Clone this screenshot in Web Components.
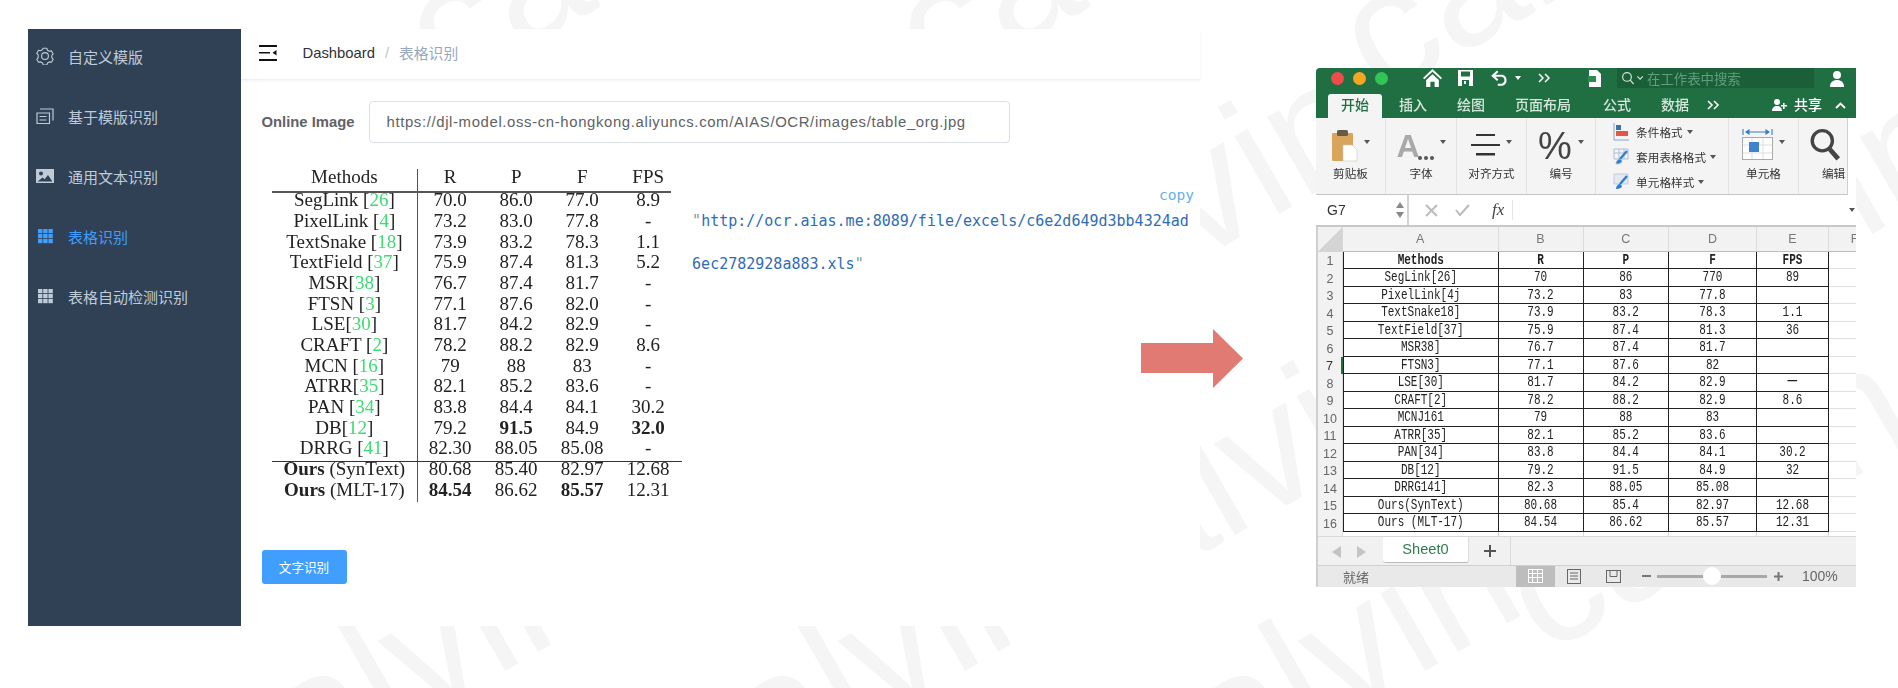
<!DOCTYPE html>
<html lang="zh">
<head>
<meta charset="utf-8">
<title>表格识别</title>
<style>
  html, body { margin: 0; background: #fff; }
  body { font-family: "Liberation Sans", "Noto Sans CJK SC", sans-serif; }
</style>
</head>
<body>
<demo-page>
  <water-mark slot="back"></water-mark>
  <demo-panel></demo-panel>
  <flow-arrow></flow-arrow>
  <excel-window></excel-window>
</demo-page>

<script>
const CJK = '"Liberation Sans", "Noto Sans CJK SC", sans-serif';

class DemoPage extends HTMLElement {
  constructor() {
    super();
    this.attachShadow({ mode: 'open' });
    this.shadowRoot.innerHTML = `
      <style>
        :host { display: block; position: relative; width: 1898px; height: 688px; overflow: hidden; }
        .row { position: relative; display: flex; align-items: flex-start; }
      </style>
      <slot name="back"></slot>
      <div class="row"><slot></slot></div>
    `;
  }
}

class WaterMark extends HTMLElement {
  constructor() {
    super();
    this.attachShadow({ mode: 'open' });
    const spots = [
      [445, 95], [935, 95], [1380, 100],
      [1007, 370], [1600, 390],
      [1069, 630], [1545, 655],
      [233, 827], [693, 827], [1153, 827]
    ];
    this.shadowRoot.innerHTML = `
      <style>
        :host { display: block; position: absolute; inset: 0; overflow: hidden; }
        span {
          position: absolute;
          font: 170px/1 "Liberation Sans", sans-serif;
          color: #f5f5f5;
          transform-origin: 0 84%;
          transform: rotate(-30deg);
          white-space: nowrap;
        }
      </style>
      ${spots.map(([x, y]) => `<span style="left:${x}px;top:${y - 143}px">calvin</span>`).join('')}
    `;
  }
}

class DemoPanel extends HTMLElement {
  constructor() {
    super();
    this.attachShadow({ mode: 'open' });
    this.shadowRoot.innerHTML = `
      <style>
        :host {
          display: flex;
          flex: none;
          width: 1172px;
          height: 597px;
          margin: 29px 0 0 28px;
          background: #fff;
        }
        main { flex: 1; min-width: 0; display: flex; flex-direction: column; }
        .form { padding: 21px 0 0 21px; }
        .url { display: flex; align-items: center; height: 42px; }
        label { width: 107px; font-size: 14.8px; font-weight: bold; color: #606266; }
        .input {
          box-sizing: border-box;
          width: 641px;
          height: 42px;
          line-height: 40px;
          padding-left: 17px;
          border: 1px solid #dcdfe6;
          border-radius: 4px;
          font-size: 14.9px;
          letter-spacing: .63px;
          color: #606266;
          white-space: nowrap;
        }
        .body { display: flex; margin: 23.6px 0 0 10px; }
        button {
          display: block;
          width: 85px;
          height: 34px;
          margin-top: 49.3px;
          padding: 0;
          border: 0;
          border-radius: 3px;
          background: #409eff;
          color: #fff;
          font: 12.6px ${CJK};
        }
      </style>
      <side-menu></side-menu>
      <main>
        <top-bar></top-bar>
        <div class="form">
          <div class="url">
            <label>Online Image</label>
            <div class="input">https://djl-model.oss-cn-hongkong.aliyuncs.com/AIAS/OCR/images/table_org.jpg</div>
          </div>
          <div class="body">
            <paper-table></paper-table>
            <result-box></result-box>
          </div>
          <button>文字识别</button>
        </div>
      </main>
    `;
  }
}

class SideMenu extends HTMLElement {
  constructor() {
    super();
    this.attachShadow({ mode: 'open' });
    const grid = `<svg width="18" height="18" viewBox="0 0 18 18" fill="currentColor">
      ${[2, 7, 12].map(y => [2, 7.2, 12.4].map(x => `<rect x="${x}" y="${y}" width="4.4" height="4.2"/>`).join('')).join('')}
    </svg>`;
    const items = [
      ['自定义模版', `<svg width="18" height="18" viewBox="0 0 18 18" fill="none" stroke="currentColor" stroke-width="1.1">
        <path d="M7.2 1.2h3.6l.7 2 1.9 1.1 2.1-.4 1.7 3-1.4 1.6v2.2l1.4 1.6-1.7 3-2.1-.4-1.9 1.1-.7 2H7.2l-.7-2-1.9-1.1-2.1.4-1.7-3 1.4-1.6V7.9L.8 6.3l1.7-3 2.1.4 1.9-1.1z" stroke-linejoin="round"/>
        <circle cx="9" cy="9" r="3.4"/></svg>`],
      ['基于模版识别', `<svg width="18" height="18" viewBox="0 0 18 18" fill="none" stroke="currentColor" stroke-width="1.2">
        <path d="M1 6h12.5v10.5H1z"/><path d="M4 2h13v11.5"/><path d="M3.5 9.5h7M3.5 13h7"/></svg>`],
      ['通用文本识别', `<svg width="18" height="18" viewBox="0 0 18 18">
        <path fill="currentColor" fill-rule="evenodd" d="M0 2h18v14H0zM5 4.5a2 2 0 1 0 0 4 2 2 0 0 0 0-4zM1.600 14.400h14.800L12 8l-3.400 4.200-2-1.600z"/></svg>`],
      ['表格识别', grid, true],
      ['表格自动检测识别', grid]
    ];
    this.shadowRoot.innerHTML = `
      <style>
        :host {
          display: block;
          flex: none;
          width: 212.5px;
          background: #304156;
          font: 15px ${CJK};
          color: #bfcbd9;
          overflow: hidden;
        }
        ul { list-style: none; margin: -3px 0 0; padding: 0; }
        li { display: flex; align-items: center; gap: 14px; height: 60px; padding-left: 8px; white-space: nowrap; }
        li.on { color: #409eff; }
        svg { display: block; flex: none; }
      </style>
      <ul>
        ${items.map(([text, icon, on]) => `<li class="${on ? 'on' : ''}">${icon}<span>${text}</span></li>`).join('')}
      </ul>
    `;
  }
}

class TopBar extends HTMLElement {
  constructor() {
    super();
    this.attachShadow({ mode: 'open' });
    this.shadowRoot.innerHTML = `
      <style>
        :host {
          display: flex;
          align-items: center;
          box-sizing: border-box;
          height: 51px;
          padding: 0 0 3px 18px;
          border-bottom: 1px solid #f0f0f0;
          box-shadow: 0 1px 3px rgba(0, 21, 41, .05);
          font: 14.8px ${CJK};
          color: #303133;
        }
        svg { display: block; margin-right: 26px; }
        i { font-style: normal; color: #c0c4cc; margin: 0 10px; }
        em { font-style: normal; color: #97a8be; }
      </style>
      <svg width="18" height="16" viewBox="0 0 18 16">
        <path d="M0 0h18v2H0zM0 7h11v1.600H0zM0 14h18v2H0z" fill="#111"/>
        <path d="M17.500 5v5.500L13.500 7.800z" fill="#111"/>
      </svg>
      <span>Dashboard</span><i>/</i><em>表格识别</em>
    `;
  }
}

class PaperTable extends HTMLElement {
  constructor() {
    super();
    this.attachShadow({ mode: 'open' });
    const rows = [
      ['SegLink [<g>26</g>]', '70.0', '86.0', '77.0', '8.9'],
      ['PixelLink [<g>4</g>]', '73.2', '83.0', '77.8', '-'],
      ['TextSnake [<g>18</g>]', '73.9', '83.2', '78.3', '1.1'],
      ['TextField [<g>37</g>]', '75.9', '87.4', '81.3', '5.2'],
      ['MSR[<g>38</g>]', '76.7', '87.4', '81.7', '-'],
      ['FTSN [<g>3</g>]', '77.1', '87.6', '82.0', '-'],
      ['LSE[<g>30</g>]', '81.7', '84.2', '82.9', '-'],
      ['CRAFT [<g>2</g>]', '78.2', '88.2', '82.9', '8.6'],
      ['MCN [<g>16</g>]', '79', '88', '83', '-'],
      ['ATRR[<g>35</g>]', '82.1', '85.2', '83.6', '-'],
      ['PAN [<g>34</g>]', '83.8', '84.4', '84.1', '30.2'],
      ['DB[<g>12</g>]', '79.2', '<b>91.5</b>', '84.9', '<b>32.0</b>'],
      ['DRRG [<g>41</g>]', '82.30', '88.05', '85.08', '-'],
      ['<b>Ours</b> (SynText)', '80.68', '85.40', '82.97', '12.68'],
      ['<b>Ours</b> (MLT-17)', '<b>84.54</b>', '86.62', '<b>85.57</b>', '12.31']
    ];
    const cells = [['Methods', 'R', 'P', 'F', 'FPS'], ...rows].flat();
    this.shadowRoot.innerHTML = `
      <style>
        :host {
          display: block;
          position: relative;
          flex: none;
          width: 410px;
          font: 19px/20.7px "Liberation Serif", serif;
          color: #222;
          filter: blur(.3px);
        }
        .grid {
          display: grid;
          grid-template-columns: 145.7px repeat(4, 66px);
          grid-template-rows: 23.6px repeat(15, 20.7px);
          text-align: center;
        }
        .grid div { white-space: nowrap; }
        g { color: #3bdc72; }
        .v { position: absolute; left: 145px; top: 2px; bottom: -1px; width: 1.4px; background: #555; }
        .t, .m { position: absolute; left: 0; height: 1.6px; background: #555; }
        .t { top: 24.4px; width: 399px; }
        .m { top: 294px; width: 410px; background: #333; }
      </style>
      <div class="grid">${cells.map(c => `<div>${c}</div>`).join('')}</div>
      <div class="v"></div><div class="t"></div><div class="m"></div>
    `;
  }
}

class ResultBox extends HTMLElement {
  constructor() {
    super();
    this.attachShadow({ mode: 'open' });
    this.shadowRoot.innerHTML = `
      <style>
        :host {
          display: block;
          position: relative;
          box-sizing: border-box;
          width: 503px;
          height: max-content;
          margin: 33px 0 0 10.6px;
          font: 15px/43px "DejaVu Sans Mono", monospace;
          color: #2f6cb5;
          word-break: break-all;
        }
        .copy { position: absolute; right: 1px; top: -15px; font-size: 14.6px; line-height: 20px; color: #63b0e6; }
        q { quotes: none; color: #7ba08a; }
      </style>
      <span class="copy">copy</span>
      <q>"</q>http://ocr.aias.me:8089/file/excels/c6e2d649d3bb4324ad6ec2782928a883.xls<q>"</q>
    `;
  }
}

class FlowArrow extends HTMLElement {
  constructor() {
    super();
    this.attachShadow({ mode: 'open' });
    this.shadowRoot.innerHTML = `
      <style>
        :host { display: block; position: absolute; left: 1141px; top: 329px; width: 102px; height: 59px; }
        svg { display: block; }
      </style>
      <svg width="102" height="59" viewBox="0 0 102 59"><path d="M0 14h72V0l30 29.500L72 59V44H0z" fill="#e07a72"/></svg>
    `;
  }
}

class ExcelWindow extends HTMLElement {
  constructor() {
    super();
    this.attachShadow({ mode: 'open' });
    this.shadowRoot.innerHTML = `
      <style>
        :host {
          display: flex;
          flex-direction: column;
          flex: none;
          width: 540px;
          height: 519px;
          margin: 68px 0 0 116px;
          background: #fff;
          overflow: hidden;
          font: 12px ${CJK};
          filter: blur(.25px);
        }
      </style>
      <excel-title></excel-title>
      <excel-tabs></excel-tabs>
      <excel-ribbon></excel-ribbon>
      <excel-formula></excel-formula>
      <excel-sheet></excel-sheet>
      <excel-footer></excel-footer>
    `;
  }
}

class ExcelTitle extends HTMLElement {
  constructor() {
    super();
    this.attachShadow({ mode: 'open' });
    this.shadowRoot.innerHTML = `
      <style>
        :host {
          display: flex;
          align-items: center;
          box-sizing: border-box;
          height: 26px;
          padding-bottom: 6px;
          background: #1f6f43;
          color: #fff;
          border-radius: 4px 0 0 0;
        }
        .dot { width: 13px; height: 13px; border-radius: 50%; margin-right: 9px; flex: none; }
        svg { display: block; flex: none; }
        .search {
          display: flex;
          align-items: center;
          box-sizing: border-box;
          flex: none;
          width: 197px;
          height: 20px;
          margin-left: 15px;
          padding-left: 4px;
          background: #1b5f39;
          color: #5f9f7d;
          font-size: 13.4px;
          white-space: nowrap;
        }
      </style>
      <span class="dot" style="margin-left:15px;background:#f04c4a"></span>
      <span class="dot" style="background:#f5a623"></span>
      <span class="dot" style="background:#31c653"></span>
      <svg style="margin-left:26px" width="19" height="18" viewBox="0 0 18 17" fill="#fff"><path d="M9 0 0 8.500l1.200 1.300L9 2.600l7.800 7.200L18 8.500zM3 10.500V17h4v-5h4v5h4v-6.500L9 5z"/></svg>
      <svg style="margin-left:16px" width="15" height="16" viewBox="0 0 15 16"><path fill="#fff" fill-rule="evenodd" d="M0 0h15v16H0zM3 1.500v5h9v-5zM4 10v6h7v-6z"/><rect x="6" y="11" width="2" height="3" fill="#fff"/></svg>
      <svg style="margin-left:18px" width="18" height="16" viewBox="0 0 16 14" fill="none" stroke="#fff" stroke-width="1.800"><path d="M6 1 1.500 5 6 9M2 5h8a4.200 4.200 0 0 1 0 8H6"/></svg>
      <svg style="margin-left:6px" width="6" height="5" viewBox="0 0 6 5"><path d="M0 0h6L3 4z" fill="#fff"/></svg>
      <svg style="margin-left:17px" width="13" height="10" viewBox="0 0 13 10" fill="none" stroke="#fff" stroke-width="1.500"><path d="m1 1 4 4-4 4M7 1l4 4-4 4"/></svg>
      <svg style="margin-left:37px" width="14" height="17" viewBox="0 0 14 17"><path fill="#fff" d="M1 0h8l4 4v13H1z"/><rect x="0" y="6" width="8" height="6" fill="#2d8a57"/></svg>
      <div class="search">
        <svg width="24" height="14" viewBox="0 0 22 12" fill="none" stroke="#cfe3d7" stroke-width="1.100"><circle cx="5.500" cy="5" r="4"/><path d="m8.500 8 3 3.500M15 4.500l2.500 2.500L20 4.500"/></svg>
        <span style="margin-left:2px">在工作表中搜索</span>
      </div>
      <svg style="margin-left:16px" width="16" height="17" viewBox="0 0 16 17" fill="#fff"><circle cx="7" cy="5" r="4"/><path d="M0 17c0-5 3-7 7-7s7 2 7 7z"/></svg>
    `;
  }
}

class ExcelTabs extends HTMLElement {
  constructor() {
    super();
    this.attachShadow({ mode: 'open' });
    const tabs = [['开始', 54, 1], ['插入', 62], ['绘图', 54], ['页面布局', 90], ['公式', 58], ['数据', 58]];
    this.shadowRoot.innerHTML = `
      <style>
        :host {
          display: flex;
          align-items: center;
          box-sizing: border-box;
          height: 24px;
          padding-left: 12px;
          background: #1f6f43;
          color: #d5e6db;
          font-size: 14px;
          font-weight: 500;
        }
        span { flex: none; box-sizing: border-box; height: 24px; text-align: center; line-height: 22px; white-space: nowrap; }
        .on { background: #f4f4f4; color: #1f6f43; border-radius: 3px 3px 0 0; }
        svg { display: block; flex: none; }
      </style>
      ${tabs.map(([t, w, on]) => `<span class="${on ? 'on' : ''}" style="width:${w}px">${t}</span>`).join('')}
      <svg style="margin:-2px 0 0 3px" width="13" height="10" viewBox="0 0 13 10" fill="none" stroke="#fff" stroke-width="1.600"><path d="m1 1 4 4-4 4M7 1l4 4-4 4"/></svg>
      <svg style="margin:-2px 0 0 52px" width="16" height="12" viewBox="0 0 16 12" fill="#fff"><circle cx="5" cy="3" r="3"/><path d="M0 12c0-3 2-5 5-5s5 2 5 5zM11 4h1.600v2H15v1.500h-2.400V10H11V7.500H9V6h2z"/></svg>
      <span style="margin-left:6px;color:#fff">共享</span>
      <svg style="margin:-2px 0 0 13px" width="11" height="7" viewBox="0 0 11 7" fill="none" stroke="#fff" stroke-width="1.800"><path d="m1 6 4.500-4.500L10 6"/></svg>
    `;
  }
}

class ExcelRibbon extends HTMLElement {
  constructor() {
    super();
    this.attachShadow({ mode: 'open' });
    const caret = `<svg class="caret" width="6" height="4" viewBox="0 0 6 4"><path d="M0 0h6L3 4z" fill="#555"/></svg>`;
    const tail = `<svg style="margin-left:-3px" width="6" height="4" viewBox="0 0 6 4"><path d="M0 0h6L3 4z" fill="#555"/></svg>`;
    const brush = `<path d="M14 3 7 11" stroke="#2f7fd0" stroke-width="2.400"/><path d="M3 16c0-3 2-5 4-5l2 2c0 2-3 3-6 3z" fill="#2f7fd0"/>`;
    const group = (w, icon, label, pad) => `
      <div class="group" style="width:${w}px;padding-left:${pad || 0}px">
        <div class="icon">${icon}</div>
        <div class="label">${label}</div>
      </div>`;
    this.shadowRoot.innerHTML = `
      <style>
        :host {
          display: flex;
          box-sizing: border-box;
          width: 532px;
          height: 77px;
          background: #f4f4f4;
          border-right: 1px solid #d0d0d0;
          border-bottom: 1px solid #c4c4c4;
          color: #333;
          font-size: 11.6px;
        }
        .group { box-sizing: border-box; flex: none; padding-top: 8px; border-right: 1px solid #e2e2e2; }
        .group:last-child { border-right: 0; }
        .icon { display: flex; align-items: center; justify-content: center; gap: 6px; height: 39px; color: #444; }
        .label { text-align: center; line-height: 18px; white-space: nowrap; }
        .caret { flex: none; margin-top: -8px; }
        svg { display: block; flex: none; }
        .glyph { font: bold 32px/36px "Liberation Sans", sans-serif; color: #a9a9a9; }
        .pct { font: 38px/36px "Liberation Sans", sans-serif; color: #444; }
        .styles { box-sizing: border-box; flex: none; width: 133px; padding: 1px 0 0 17px; border-right: 1px solid #e2e2e2; }
        .styles div { display: flex; align-items: center; gap: 7px; height: 25px; white-space: nowrap; letter-spacing: .1px; }
      </style>
      ${group(70, `<svg width="26" height="32" viewBox="0 0 26 32">
          <rect x="0" y="3" width="21" height="28" rx="1" fill="#d9a45c"/>
          <rect x="5" y="0" width="11" height="6" rx="1.500" fill="#6a5a45"/>
          <path d="M11 15h9l5 5v11H11z" fill="#fff" stroke="#c8c8c8" stroke-width=".6"/>
        </svg>${caret}`, '剪贴板')}
      ${group(71, `<span class="glyph">A</span><svg style="margin:24px 0 0 -8px" width="16" height="4" viewBox="0 0 16 4" fill="#555"><circle cx="2" cy="2" r="2"/><circle cx="8" cy="2" r="2"/><circle cx="14" cy="2" r="2"/></svg>${caret}`, '字体')}
      ${group(70, `<svg width="29" height="26" viewBox="0 0 29 26" fill="#333"><rect x="5" y="1" width="19" height="2"/><rect x="0" y="11" width="29" height="2"/><rect x="5" y="20" width="19" height="2.500"/></svg>${caret}`, '对齐方式')}
      ${group(69, `<span class="pct">%</span>${caret}`, '编号')}
      <div class="styles">
        <div><svg width="16" height="18" viewBox="0 0 16 18"><path d="M1 0v17h15" fill="none" stroke="#8aa4c8"/><rect x="3" y="2" width="5" height="5" fill="#3f6fb0"/><rect x="3" y="8" width="12" height="5" fill="#e2574c"/></svg><span>条件格式</span>${tail}</div>
        <div><svg width="16" height="18" viewBox="0 0 16 18" fill="none" stroke="#9db4d4" stroke-width=".8"><path d="M1 1h14v10H1zM1 5h14M6 1v10M11 1v10"/>${brush}</svg><span>套用表格格式</span>${tail}</div>
        <div><svg width="16" height="18" viewBox="0 0 16 18" fill="none"><rect x="1" y="1" width="14" height="10" fill="#e4e8ef" stroke="#b9c4d4" stroke-width=".8"/>${brush}</svg><span>单元格样式</span>${tail}</div>
      </div>
      ${group(70, `<svg style="margin-top:-4px" width="31" height="32" viewBox="0 0 31 32">
          <path d="M1 1v6M30 1v6M4 4h23M4 4l3-2v4zM27 4l-3-2v4z" stroke="#2f7fd0" fill="#2f7fd0" stroke-width="1.100"/>
          <rect x=".5" y="9.500" width="30" height="22" fill="#fff" stroke="#aaa"/>
          <path d="M10 10v21M21 10v21M1 17h29M1 25h29" stroke="#ddd"/>
          <rect x="7" y="14" width="10" height="10" fill="#3f82cf"/>
        </svg>${caret}`, '单元格')}
      ${group(49, `<svg style="margin:-2px 0 0 -16px" width="33" height="34" viewBox="0 0 30 32" fill="none" stroke="#444"><circle cx="12" cy="12" r="9.500" stroke-width="3.200"/><path d="m19 20 8 9" stroke-width="4.500"/></svg>`, '编辑', 20)}
    `;
  }
}

class ExcelFormula extends HTMLElement {
  constructor() {
    super();
    this.attachShadow({ mode: 'open' });
    this.shadowRoot.innerHTML = `
      <style>
        :host {
          display: flex;
          align-items: center;
          box-sizing: border-box;
          height: 32px;
          border-bottom: 2px solid #c8c8c8;
          color: #b8b8b8;
        }
        .name {
          display: flex;
          align-items: center;
          justify-content: space-between;
          box-sizing: border-box;
          flex: none;
          width: 93px;
          height: 30px;
          padding: 0 3px 0 11px;
          background: #fff;
          border-right: 2px solid #d4d4d4;
          color: #333;
          font-size: 14px;
        }
        .fx { font: italic 17px "Liberation Serif", serif; color: #444; margin-left: 22px; }
        .sep { width: 1px; height: 20px; background: #e4e4e4; margin-left: 8px; }
        svg { display: block; flex: none; }
      </style>
      <div class="name"><span>G7</span>
        <svg width="8" height="16" viewBox="0 0 8 16" fill="#888"><path d="M4 0l4 6H0zM4 16l4-6H0z"/></svg>
      </div>
      <svg style="margin-left:16px" width="13" height="13" viewBox="0 0 13 13" fill="none" stroke="#bbb" stroke-width="2"><path d="m1 1 11 11M12 1 1 12"/></svg>
      <svg style="margin-left:17px" width="15" height="12" viewBox="0 0 15 12" fill="none" stroke="#bbb" stroke-width="2"><path d="m1 6 4 5L14 1"/></svg>
      <span class="fx">fx</span><span class="sep"></span>
      <svg style="margin-left:auto;margin-right:1px" width="6" height="4" viewBox="0 0 6 4"><path d="M0 0h6L3 4z" fill="#555"/></svg>
    `;
  }
}

class ExcelSheet extends HTMLElement {
  constructor() {
    super();
    this.attachShadow({ mode: 'open' });
    const rows = [
      ['Methods', 'R', 'P', 'F', 'FPS'],
      ['SegLink[26]', '70', '86', '770', '89'],
      ['PixelLink[4j', '73.2', '83', '77.8', ''],
      ['TextSnake18]', '73.9', '83.2', '78.3', '1.1'],
      ['TextField[37]', '75.9', '87.4', '81.3', '36'],
      ['MSR38]', '76.7', '87.4', '81.7', ''],
      ['FTSN3]', '77.1', '87.6', '82', ''],
      ['LSE[30]', '81.7', '84.2', '82.9', '一'],
      ['CRAFT[2]', '78.2', '88.2', '82.9', '8.6'],
      ['MCNJ161', '79', '88', '83', ''],
      ['ATRR[35]', '82.1', '85.2', '83.6', ''],
      ['PAN[34]', '83.8', '84.4', '84.1', '30.2'],
      ['DB[12]', '79.2', '91.5', '84.9', '32'],
      ['DRRG141]', '82.3', '88.05', '85.08', ''],
      ['Ours(SynText)', '80.68', '85.4', '82.97', '12.68'],
      ['Ours (MLT-17)', '84.54', '86.62', '85.57', '12.31']
    ];
    const head = ['', 'A', 'B', 'C', 'D', 'E', 'F'];
    let cells = head.map((h, i) => `<div class="${i ? 'col' : 'corner'}">${h}</div>`).join('');
    rows.forEach((row, r) => {
      cells += `<div class="num ${r === 6 ? 'cur' : ''}">${r + 1}</div>`;
      row.forEach((c, i) => {
        cells += `<div class="cell ${r === 0 ? 'hd' : ''} ${i === 0 ? 'first' : ''}"><span>${c}</span></div>`;
      });
      cells += '<div class="rest"></div>';
    });
    cells += '<div class="num"></div>' + '<div class="rest tail"></div>'.repeat(6);
    this.shadowRoot.innerHTML = `
      <style>
        :host {
          display: grid;
          grid-template-columns: 25px 155.5px 85px 85.5px 88px 72px 52px;
          grid-template-rows: 24.5px repeat(16, 17.5px) 4.3px;
          overflow: hidden;
          box-sizing: border-box;
          border-left: 2px solid #cfcfcf;
          background: #fff;
          color: #222;
        }
        .corner {
          background: linear-gradient(135deg, #f1f1f1 50%, #d4d4d4 50%);
          border-right: 1px solid #d8d8d8;
        }
        .col, .num {
          display: flex;
          align-items: center;
          justify-content: center;
          background: #f2f2f2;
          color: #777;
          font-size: 12.5px;
        }
        .col { border-right: 1px solid #dcdcdc; border-bottom: 1px solid #bdbdbd; }
        .num { color: #666; border-right: 1px solid #dcdcdc; padding-top: 2px; box-sizing: border-box; }
        .cur { color: #333; border-right: 2px solid #1f6f43; }
        .cell {
          box-sizing: border-box;
          border-right: 1.5px solid #222;
          border-bottom: 1.5px solid #222;
          text-align: center;
          font: 11px/16px "Liberation Mono", monospace;
          white-space: pre;
          overflow: hidden;
        }
        .cell span { display: inline-block; transform: scaleY(1.3); }
        .first { border-left: 1.5px solid #222; }
        .hd { font-weight: bold; }
        .rest { box-sizing: border-box; border-bottom: 1px solid #e0e0e0; }
        .tail { border-bottom: 0; border-right: 1px solid #d8d8d8; }
      </style>
      ${cells}
    `;
  }
}

class ExcelFooter extends HTMLElement {
  constructor() {
    super();
    this.attachShadow({ mode: 'open' });
    this.shadowRoot.innerHTML = `
      <style>
        :host { display: block; border-left: 2px solid #cfcfcf; font-size: 13px; color: #666; }
        .tabs {
          display: flex;
          align-items: flex-start;
          height: 29px;
          background: #f1f1f1;
          border-top: 1px solid #d8d8d8;
          box-sizing: border-box;
        }
        .sheet {
          box-sizing: border-box;
          width: 86px;
          height: 26px;
          margin-left: 17px;
          background: #fff;
          border-radius: 0 0 3px 3px;
          border-bottom: 1px solid #bbb;
          border-right: 1px solid #ddd;
          text-align: center;
          font: 14.6px/25px "Liberation Sans", sans-serif;
          color: #2f7d4f;
        }
        .status {
          display: flex;
          align-items: center;
          height: 22px;
          background: #e9e9e9;
          border-top: 1px solid #d0d0d0;
          box-sizing: border-box;
          white-space: nowrap;
        }
        .view { display: flex; align-items: center; justify-content: center; height: 100%; }
        svg { display: block; flex: none; }
      </style>
      <div class="tabs">
        <svg style="margin:9px 0 0 14px" width="9" height="12" viewBox="0 0 9 12" fill="#c4c4c4"><path d="M9 0v12L0 6z"/></svg>
        <svg style="margin:9px 0 0 16px" width="9" height="12" viewBox="0 0 9 12" fill="#c4c4c4"><path d="M0 0v12l9-6z"/></svg>
        <div class="sheet">Sheet0</div>
        <svg style="margin:8px 0 0 15px" width="12" height="12" viewBox="0 0 12 12" fill="#555"><path d="M5 0h2v5h5v2H7v5H5V7H0V5h5z"/></svg>
        <span style="width:1px;height:28px;background:#d8d8d8;margin-left:14px"></span>
      </div>
      <div class="status">
        <span style="margin-left:25px">就绪</span>
        <div class="view" style="width:39px;margin-left:147px;background:#bdbdbd">
          <svg width="15" height="14" viewBox="0 0 15 14" fill="#fff"><path fill-rule="evenodd" d="M0 0h15v14H0zM1 1v3h3V1zM5 1v3h4V1zM10 1v3h4V1zM1 5v3h3V5zM5 5v3h4V5zM10 5v3h4V5zM1 9v4h3V9zM5 9v4h4V9zM10 9v4h4V9z"/></svg>
        </div>
        <svg style="margin-left:12px" width="14" height="15" viewBox="0 0 14 15" fill="none" stroke="#666"><rect x=".5" y=".5" width="13" height="14"/><path d="M3 4h8M3 7h8M3 10h8"/></svg>
        <svg style="margin-left:25px" width="15" height="13" viewBox="0 0 15 13" fill="none" stroke="#666"><rect x=".5" y=".5" width="14" height="12"/><path d="M4 .5v6h7v-6"/></svg>
        <span style="width:9px;height:2px;background:#777;margin-left:21px"></span>
        <div style="position:relative;width:110px;height:3px;margin-left:6px;background:#a8a8a8">
          <span style="position:absolute;left:46px;top:-8px;width:18px;height:18px;border-radius:50%;background:#fff"></span>
        </div>
        <svg style="margin-left:7px" width="9" height="9" viewBox="0 0 9 9" fill="#777"><path d="M3.500 0h2v3.500H9v2H5.500V9h-2V5.500H0v-2h3.500z"/></svg>
        <span style="margin-left:19px;font:14px 'Liberation Sans',sans-serif;color:#666">100%</span>
      </div>
    `;
  }
}

customElements.define('demo-page', DemoPage);
customElements.define('water-mark', WaterMark);
customElements.define('demo-panel', DemoPanel);
customElements.define('side-menu', SideMenu);
customElements.define('top-bar', TopBar);
customElements.define('paper-table', PaperTable);
customElements.define('result-box', ResultBox);
customElements.define('flow-arrow', FlowArrow);
customElements.define('excel-window', ExcelWindow);
customElements.define('excel-title', ExcelTitle);
customElements.define('excel-tabs', ExcelTabs);
customElements.define('excel-ribbon', ExcelRibbon);
customElements.define('excel-formula', ExcelFormula);
customElements.define('excel-sheet', ExcelSheet);
customElements.define('excel-footer', ExcelFooter);
</script>
</body>
</html>
